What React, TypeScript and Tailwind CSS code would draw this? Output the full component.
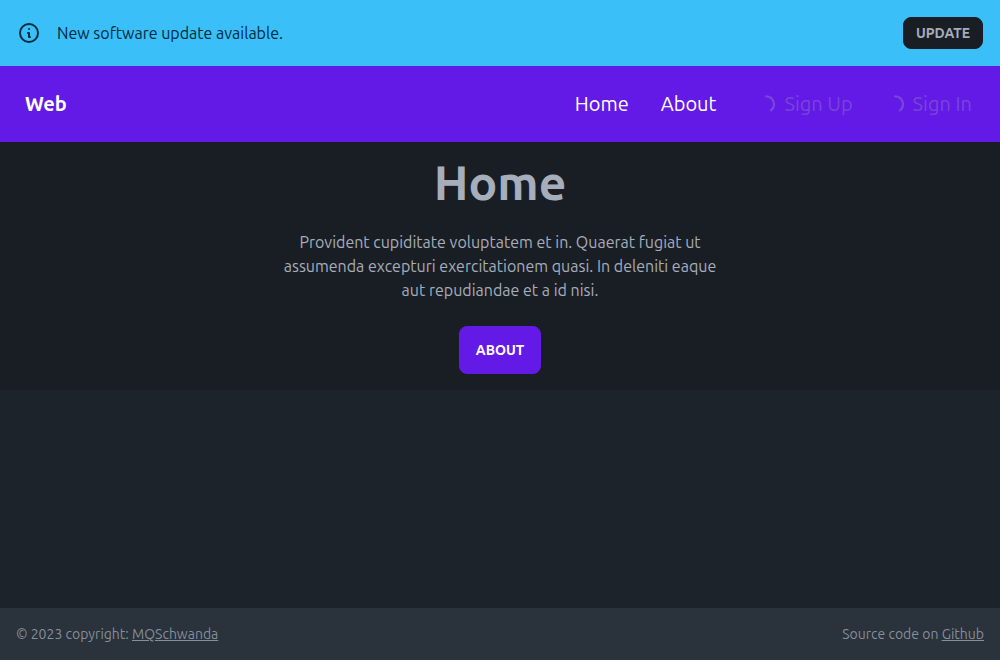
import React from "react";

function InfoIcon() {
  return (
    <svg viewBox="0 0 24 24" fill="none" stroke="currentColor" strokeWidth="2" strokeLinecap="round" strokeLinejoin="round" className="size-6 shrink-0" aria-hidden="true">
      <path d="M13 16h-1v-4h-1m1-4h.01M21 12a9 9 0 11-18 0 9 9 0 0118 0z" />
    </svg>
  );
}

function Spinner() {
  return (
    <svg viewBox="0 0 20 20" fill="none" stroke="currentColor" strokeWidth="2.2" strokeLinecap="round" className="size-5 shrink-0" aria-hidden="true">
      <path d="M10.1 2.3A7.9 7.9 0 0 1 14.9 16.4" />
    </svg>
  );
}

function UpdateAlert() {
  return (
    <div role="alert" className="flex items-center gap-4 border border-[#3abff8] bg-[#3abff8] p-4 text-[#002b3d]">
      <InfoIcon />
      <span className="grow">New software update available.</span>
      <button type="button" className="h-8 rounded-lg border border-[#191e24] bg-[#191e24] px-3 text-sm font-semibold text-[#a6adbb]">
        UPDATE
      </button>
    </div>
  );
}

function NavBar() {
  return (
    <nav className="flex h-19 items-center justify-between bg-[#641ae6] px-3 text-xl text-white">
      <a href="#" className="border border-transparent px-3 font-semibold">Web</a>
      <ul className="flex items-center">
        <li><a href="#home" className="block px-4">Home</a></li>
        <li><a href="#about" className="block px-4">About</a></li>
        {["Sign Up", "Sign In"].map((label) => (
          <li key={label} className="nth-3:pl-2">
            <button type="button" disabled className="flex items-center gap-2 px-4 text-[#a6adbb]/30">
              <Spinner />
              {label}
            </button>
          </li>
        ))}
      </ul>
    </nav>
  );
}

export default function App() {
  return (
    <div className="flex min-h-screen flex-col bg-[#1d232a] font-['Ubuntu','Noto_Sans',sans-serif] text-[#a6adbb]">
      <UpdateAlert />
      <NavBar />
      <main className="grow">
        <section className="flex flex-col items-center bg-[#191e24] p-4 text-center">
          <h1 className="text-5xl font-bold">Home</h1>
          <p className="max-w-md py-6">
            Provident cupiditate voluptatem et in. Quaerat fugiat ut assumenda excepturi exercitationem quasi. In deleniti eaque aut repudiandae et a id nisi.
          </p>
          <a href="#about" className="flex h-12 items-center rounded-lg border border-[#641ae6] bg-[#641ae6] px-4 text-sm font-semibold text-white">
            ABOUT
          </a>
        </section>
      </main>
      <footer className="flex items-center justify-between bg-[#2a323c] p-4 text-sm text-[#a6adbb]/75">
        <p>© 2023 copyright: <a href="#author" className="underline">MQSchwanda</a></p>
        <p>Source code on <a href="#source" className="underline">Github</a></p>
      </footer>
    </div>
  );
}
